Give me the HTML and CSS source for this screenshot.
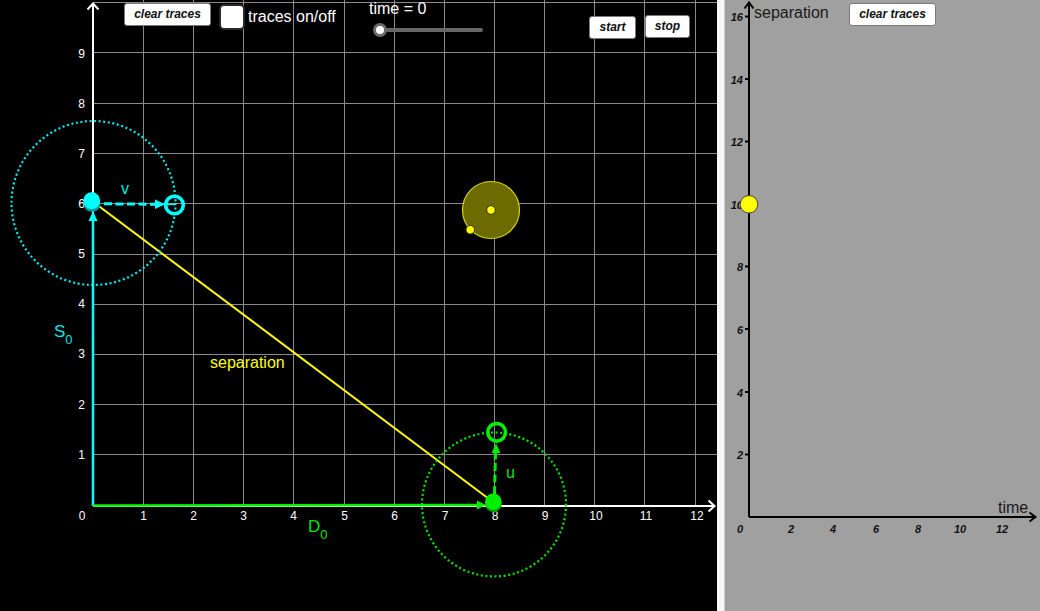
FILE: index.html
```html
<!DOCTYPE html>
<html>
<head>
<meta charset="utf-8">
<link rel="stylesheet" href="styles.css">
</head>
<body>
<div class="app">
  <div class="graphics">
    <svg class="canvas" width="717" height="611" viewBox="0 0 717 611">
      <g class="grid">
        <line x1="143.5" y1="0" x2="143.5" y2="506"/>
        <line x1="193.5" y1="0" x2="193.5" y2="506"/>
        <line x1="243.5" y1="0" x2="243.5" y2="506"/>
        <line x1="293.5" y1="0" x2="293.5" y2="506"/>
        <line x1="344.5" y1="0" x2="344.5" y2="506"/>
        <line x1="394.5" y1="0" x2="394.5" y2="506"/>
        <line x1="444.5" y1="0" x2="444.5" y2="506"/>
        <line x1="494.5" y1="0" x2="494.5" y2="506"/>
        <line x1="544.5" y1="0" x2="544.5" y2="506"/>
        <line x1="594.5" y1="0" x2="594.5" y2="506"/>
        <line x1="644.5" y1="0" x2="644.5" y2="506"/>
        <line x1="695.5" y1="0" x2="695.5" y2="506"/>
        <line x1="93" y1="454.5" x2="717" y2="454.5"/>
        <line x1="93" y1="404.5" x2="717" y2="404.5"/>
        <line x1="93" y1="354.5" x2="717" y2="354.5"/>
        <line x1="93" y1="304.5" x2="717" y2="304.5"/>
        <line x1="93" y1="254.5" x2="717" y2="254.5"/>
        <line x1="93" y1="203.5" x2="717" y2="203.5"/>
        <line x1="93" y1="153.5" x2="717" y2="153.5"/>
        <line x1="93" y1="103.5" x2="717" y2="103.5"/>
        <line x1="93" y1="52.5" x2="717" y2="52.5"/>
        <line x1="93" y1="2.5" x2="717" y2="2.5"/>
      </g>
      <g class="axes">
        <line x1="93" y1="506" x2="93" y2="4"/>
        <polyline points="87.5,9.5 93,3.5 98.5,9.5"/>
        <line x1="93" y1="506" x2="714" y2="506"/>
        <polyline points="708.5,500.5 714.5,506 708.5,511.5"/>
      </g>
      <g class="ticklabels">
        <text x="85" y="58" text-anchor="end">9</text>
        <text x="85" y="108" text-anchor="end">8</text>
        <text x="85" y="158" text-anchor="end">7</text>
        <text x="85" y="208" text-anchor="end">6</text>
        <text x="85" y="258" text-anchor="end">5</text>
        <text x="85" y="308" text-anchor="end">4</text>
        <text x="85" y="358" text-anchor="end">3</text>
        <text x="85" y="409" text-anchor="end">2</text>
        <text x="85" y="459" text-anchor="end">1</text>
        <text x="82" y="520" text-anchor="middle">0</text>
        <text x="143.5" y="520" text-anchor="middle">1</text>
        <text x="193.5" y="520" text-anchor="middle">2</text>
        <text x="243.5" y="520" text-anchor="middle">3</text>
        <text x="293.5" y="520" text-anchor="middle">4</text>
        <text x="344.5" y="520" text-anchor="middle">5</text>
        <text x="394.5" y="520" text-anchor="middle">6</text>
        <text x="445" y="520" text-anchor="middle">7</text>
        <text x="495" y="520" text-anchor="middle">8</text>
        <text x="545" y="520" text-anchor="middle">9</text>
        <text x="596" y="520" text-anchor="middle">10</text>
        <text x="646" y="520" text-anchor="middle">11</text>
        <text x="697" y="520" text-anchor="middle">12</text>
      </g>

      <!-- yellow separation line -->
      <line class="sep-line" x1="92" y1="201" x2="493" y2="502"/>

      <!-- cyan (S) -->
      <circle class="dots-cyan" cx="93.5" cy="203" r="82"/>
      <line class="cyan-solid" x1="93" y1="506" x2="93" y2="220"/>
      <polygon class="cyan-fill" points="93,211 88.5,221 97.5,221"/>
      <line class="cyan-dash" x1="104" y1="203.8" x2="156" y2="204.2"/>
      <polygon class="cyan-fill" points="165,204.3 155,199.5 155,209"/>
      <line class="cyan-thin" x1="165" y1="204.3" x2="176" y2="204.5"/>
      <circle class="cyan-ring" cx="174.5" cy="205" r="8.8"/>
      <circle class="cyan-shadow" cx="92" cy="203.5" r="8.5"/>
      <circle class="cyan-fill" cx="91.7" cy="200.7" r="8.5"/>

      <!-- green (D) -->
      <circle class="dots-green" cx="494" cy="504.5" r="72"/>
      <line class="green-solid" x1="93" y1="505.5" x2="478" y2="505"/>
      <polygon class="green-fill" points="486,505 477,500.5 477,509.5"/>
      <line class="green-dash" x1="494.5" y1="494" x2="495.5" y2="453"/>
      <polygon class="green-fill" points="496,443.5 491.5,453 500.5,453"/>
      <circle class="green-ring" cx="496.7" cy="432.3" r="8.8"/>
      <circle class="green-shadow" cx="493.5" cy="504" r="8.3"/>
      <circle class="green-fill" cx="493.3" cy="501.7" r="8.3"/>

      <!-- yellow circle with points -->
      <circle class="olive" cx="491" cy="210" r="28.5"/>
      <circle class="ydot" cx="491" cy="210" r="4.3"/>
      <circle class="ydot" cx="470.3" cy="229.7" r="4.3"/>

      <!-- labels -->
      <text class="lbl cyan-text" x="121" y="194">v</text>
      <text class="lbl green-text" x="506" y="478">u</text>
      <text class="lbl yellow-text" x="210" y="368">separation</text>
      <text class="big cyan-text" x="54" y="337">S<tspan class="sub" dy="7">0</tspan></text>
      <text class="big green-text" x="308" y="532">D<tspan class="sub" dy="7">0</tspan></text>
    </svg>

    <button class="btn btn-clear-left">clear traces</button>
    <div class="check"></div>
    <span class="check-label">traces on/off</span>
    <span class="time-label">time = 0</span>
    <div class="slider">
      <div class="track"></div>
      <div class="knob"></div>
    </div>
    <button class="btn btn-start">start</button>
    <button class="btn btn-stop">stop</button>
  </div>

  <div class="divider"></div>

  <div class="panel">
    <svg class="panel-svg" width="315" height="611" viewBox="0 0 315 611">
      <g class="axes-dark">
        <line x1="24" y1="517" x2="24" y2="3"/>
        <polyline points="19.5,8.5 24,2.5 28.5,8.5"/>
        <line x1="24" y1="517" x2="310" y2="517"/>
        <polyline points="304.5,512.5 310.5,517 304.5,521.5"/>
        <line x1="20" y1="16.5" x2="24" y2="16.5"/>
        <line x1="20" y1="79" x2="24" y2="79"/>
        <line x1="20" y1="141.5" x2="24" y2="141.5"/>
        <line x1="20" y1="204" x2="24" y2="204"/>
        <line x1="20" y1="266.5" x2="24" y2="266.5"/>
        <line x1="20" y1="329" x2="24" y2="329"/>
        <line x1="20" y1="392" x2="24" y2="392"/>
        <line x1="20" y1="454.5" x2="24" y2="454.5"/>
      </g>
      <g class="plabels">
        <text x="18" y="21" text-anchor="end">16</text>
        <text x="18" y="83.5" text-anchor="end">14</text>
        <text x="18" y="146" text-anchor="end">12</text>
        <text x="18" y="208.5" text-anchor="end">10</text>
        <text x="18" y="271" text-anchor="end">8</text>
        <text x="18" y="333.5" text-anchor="end">6</text>
        <text x="18" y="396.5" text-anchor="end">4</text>
        <text x="18" y="459" text-anchor="end">2</text>
        <text x="15" y="533" text-anchor="middle">0</text>
        <text x="66" y="533" text-anchor="middle">2</text>
        <text x="108" y="533" text-anchor="middle">4</text>
        <text x="151" y="533" text-anchor="middle">6</text>
        <text x="193" y="533" text-anchor="middle">8</text>
        <text x="235" y="533" text-anchor="middle">10</text>
        <text x="277" y="533" text-anchor="middle">12</text>
      </g>
      <text class="ptitle" x="29" y="18">separation</text>
      <text class="ptitle" x="273" y="513">time</text>
      <circle class="ypoint" cx="24" cy="204.3" r="8.8"/>
    </svg>
    <button class="btn btn-clear-right">clear traces</button>
  </div>
</div>
</body>
</html>
```
FILE: styles.css
```css
html, body {
  margin: 0;
  padding: 0;
  width: 1040px;
  height: 611px;
  overflow: hidden;
  background: #000;
  font-family: "Liberation Sans", Arial, sans-serif;
}

.app {
  display: flex;
  width: 1040px;
  height: 611px;
}

.graphics {
  position: relative;
  width: 717px;
  height: 611px;
  background: #000;
  flex: none;
}

.canvas {
  display: block;
}

.grid line {
  stroke: #8a8a8a;
  stroke-width: 1;
}

.axes line,
.axes polyline {
  stroke: #fff;
  stroke-width: 2;
  fill: none;
}

.ticklabels text {
  fill: #fff;
  font-family: "Liberation Sans", Arial, sans-serif;
  font-size: 12px;
}

.sep-line {
  stroke: #ffff00;
  stroke-width: 2;
}

.dots-cyan {
  fill: none;
  stroke: #00eeee;
  stroke-width: 2.2;
  stroke-dasharray: 2 2.6;
}

.dots-green {
  fill: none;
  stroke: #00e600;
  stroke-width: 2.2;
  stroke-dasharray: 2 2.6;
}

.cyan-solid {
  stroke: #00ffff;
  stroke-width: 2.5;
}

.cyan-thin {
  stroke: #00ffff;
  stroke-width: 1.5;
}

.cyan-dash {
  stroke: #00ffff;
  stroke-width: 3;
  stroke-dasharray: 8 3.5;
}

.cyan-fill {
  fill: #00ffff;
}

.cyan-shadow {
  fill: #009c9c;
}

.cyan-ring {
  fill: none;
  stroke: #00ffff;
  stroke-width: 3.6;
}

.green-solid {
  stroke: #00ee00;
  stroke-width: 2.5;
}

.green-dash {
  stroke: #00ee00;
  stroke-width: 3;
  stroke-dasharray: 8 3.5;
}

.green-fill {
  fill: #00ee00;
}

.green-shadow {
  fill: #009a00;
}

.green-ring {
  fill: none;
  stroke: #00ee00;
  stroke-width: 3.6;
}

.olive {
  fill: #6b6b00;
  stroke: #d6d600;
  stroke-width: 1.2;
}

.ydot {
  fill: #ffff00;
  stroke: #333300;
  stroke-width: 1;
}

.lbl {
  font-family: "Liberation Sans", Arial, sans-serif;
  font-size: 16px;
}

.big {
  font-family: "Liberation Sans", Arial, sans-serif;
  font-size: 17px;
}

.sub {
  font-size: 13px;
}

.cyan-text { fill: #00e8e8; }
.green-text { fill: #00e600; }
.yellow-text { fill: #ffff00; }

.btn {
  position: absolute;
  box-sizing: border-box;
  height: 23px;
  padding: 0;
  background: #fff;
  border: 1px solid #7a7a7a;
  border-radius: 3px;
  font-family: "Liberation Sans", Arial, sans-serif;
  font-size: 12px;
  font-weight: bold;
  font-style: italic;
  color: #111;
  text-align: center;
  line-height: 21px;
}

.btn-clear-left {
  left: 124px;
  top: 3px;
  width: 87px;
}

.btn-start {
  left: 589px;
  top: 16px;
  width: 47px;
}

.btn-stop {
  left: 645px;
  top: 15px;
  width: 45px;
}

.check {
  position: absolute;
  left: 219px;
  top: 4px;
  width: 26px;
  height: 26px;
  box-sizing: border-box;
  background: #fff;
  border: 2px solid #2a2a2a;
  border-radius: 5px;
}

.check-label {
  position: absolute;
  left: 248px;
  top: 8px;
  font-size: 16px;
  color: #fff;
  white-space: nowrap;
}

.time-label {
  position: absolute;
  left: 369px;
  top: 0px;
  font-size: 16px;
  color: #fff;
  white-space: nowrap;
}

.slider {
  position: absolute;
  left: 373px;
  top: 23px;
  width: 112px;
  height: 14px;
}

.track {
  position: absolute;
  left: 7px;
  top: 5px;
  width: 103px;
  height: 4px;
  border-radius: 2px;
  background: #666;
}

.knob {
  position: absolute;
  left: 0;
  top: 0;
  width: 14px;
  height: 14px;
  box-sizing: border-box;
  border-radius: 50%;
  background: #fff;
  border: 3px solid #6a6a6a;
}

.divider {
  flex: none;
  width: 7px;
  height: 611px;
  background: #f8f8f8;
  border-right: 1px solid #cfcfcf;
}

.panel {
  position: relative;
  flex: none;
  width: 315px;
  height: 611px;
  background: #a0a0a0;
}

.panel-svg {
  display: block;
}

.axes-dark line,
.axes-dark polyline {
  stroke: #000;
  stroke-width: 2;
  fill: none;
}

.plabels text {
  fill: #111;
  font-family: "Liberation Sans", Arial, sans-serif;
  font-size: 11px;
  font-weight: bold;
  font-style: italic;
}

.ptitle {
  fill: #1a1a1a;
  font-family: "Liberation Sans", Arial, sans-serif;
  font-size: 16px;
}

.ypoint {
  fill: #ffff00;
  stroke: #444;
  stroke-width: 1;
}

.btn-clear-right {
  left: 124px;
  top: 3px;
  width: 87px;
}
```
